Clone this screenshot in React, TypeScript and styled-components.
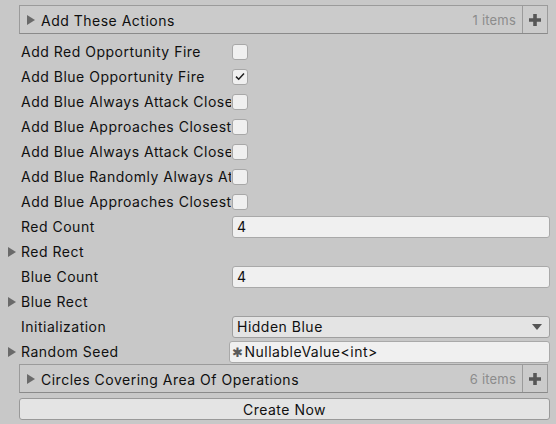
import React from "react";
import styled, { createGlobalStyle } from "styled-components";

const Global = createGlobalStyle`
  html, body { margin: 0; padding: 0; background: #c8c8c8; }
  body { font-family: Inter, "Noto Sans", sans-serif; font-size: 14px; letter-spacing: 0.5px; color: #101010; }
  * { box-sizing: border-box; }
`;

const Page = styled.div`
  width: 556px;
  height: 424px;
  padding-top: 5px;
  display: flex;
  flex-direction: column;
  overflow: hidden;
`;

const ListHeader = styled.div<{ $gapBelow: number }>`
  margin: 0 8px ${(p) => p.$gapBelow}px 19px;
  height: 29px;
  border: 1px solid #9b9b9b;
  border-bottom-color: #8a8a8a;
  background: #cbcbcb;
  display: flex;
  align-items: stretch;
`;

const HeaderTitle = styled.div`
  flex: 1;
  display: flex;
  align-items: center;
  padding-left: 7px;
  padding-top: 1px;
  color: #0f0f0f;
`;

const TitleText = styled.span`
  margin-left: 6px;
`;

const Count = styled.span`
  color: #8c8c8c;
  font-size: 13px;
  letter-spacing: 0.2px;
  padding-right: 6px;
  padding-top: 1px;
  display: flex;
  align-items: center;
`;

const AddButton = styled.div`
  width: 25px;
  border-left: 1px solid #9b9b9b;
  display: flex;
  align-items: center;
  justify-content: center;
`;

const Row = styled.div`
  height: 25px;
  display: flex;
  align-items: center;
  padding: 0 6px;
`;

const ArrowSlot = styled.div`
  width: 15px;
  display: flex;
  align-items: center;
  justify-content: flex-start;
  padding-left: 2px;
`;

const Label = styled.div`
  width: 210px;
  margin-right: 1px;
  white-space: nowrap;
  overflow: hidden;
`;

const Checkbox = styled.div`
  width: 16px;
  height: 16px;
  border: 1px solid #a8a8a8;
  border-radius: 3px;
  background: #f0f0f0;
  display: flex;
  align-items: center;
  justify-content: center;
`;

const TextField = styled.div<{ $shift?: number }>`
  flex: 1;
  height: 22px;
  margin-left: ${(p) => -(p.$shift || 0)}px;
  border: 1px solid #a9a9a9;
  border-radius: 3px;
  background: #f0f0f0;
  display: flex;
  align-items: center;
  padding-left: ${(p) => (p.$shift ? 2 : 4)}px;
  white-space: nowrap;
`;

const Dropdown = styled(TextField)`
  background: #e4e4e4;
  border-color: #9f9f9f;
  justify-content: space-between;
  padding-right: 7px;
`;

const Star = styled.span`
  color: #5a5a5a;
  font-size: 13px;
  margin-right: 1px;
`;

const Button = styled.div`
  margin: 0 6px 0 19px;
  height: 22px;
  border: 1px solid #999;
  border-radius: 3px;
  background: #e4e4e4;
  display: flex;
  align-items: center;
  justify-content: center;
`;

const Fold = ({ color = "#6a6a6a" }: { color?: string }) => (
  <svg width="8" height="10" viewBox="0 0 8 10">
    <path d="M0 0 L8 5 L0 10 Z" fill={color} />
  </svg>
);

const Plus = () => (
  <svg width="14" height="14" viewBox="0 0 14 14">
    <path d="M5.2 1 h3.6 v4.2 h4.2 v3.6 h-4.2 v4.2 h-3.6 v-4.2 h-4.2 v-3.6 h4.2 z" fill="#575757" />
  </svg>
);

const Check = () => (
  <svg width="10" height="9" viewBox="0 0 10 9">
    <path d="M1 4.6 L3.7 7.2 L9 1.5" stroke="#1e1e1e" strokeWidth="1.5" fill="none" />
  </svg>
);

const DownTri = () => (
  <svg width="10" height="6" viewBox="0 0 10 6">
    <path d="M0 0 H10 L5 6 Z" fill="#555" />
  </svg>
);

const checks: [string, boolean][] = [
  ["Add Red Opportunity Fire", false],
  ["Add Blue Opportunity Fire", true],
  ["Add Blue Always Attack Closest", false],
  ["Add Blue Approaches Closest", false],
  ["Add Blue Always Attack Closest Hidden", false],
  ["Add Blue Randomly Always Attack", false],
  ["Add Blue Approaches Closest Hidden", false],
];

export default function App() {
  return (
    <Page>
      <Global />
      <ListHeader $gapBelow={5}>
        <HeaderTitle>
          <Fold />
          <TitleText>Add These Actions</TitleText>
        </HeaderTitle>
        <Count>1 items</Count>
        <AddButton>
          <Plus />
        </AddButton>
      </ListHeader>
      {checks.map(([label, on]) => (
        <Row key={label}>
          <ArrowSlot />
          <Label>{label}</Label>
          <Checkbox>{on && <Check />}</Checkbox>
        </Row>
      ))}
      <Row>
        <ArrowSlot />
        <Label>Red Count</Label>
        <TextField>4</TextField>
      </Row>
      <Row>
        <ArrowSlot>
          <Fold />
        </ArrowSlot>
        <Label>Red Rect</Label>
      </Row>
      <Row>
        <ArrowSlot />
        <Label>Blue Count</Label>
        <TextField>4</TextField>
      </Row>
      <Row>
        <ArrowSlot>
          <Fold />
        </ArrowSlot>
        <Label>Blue Rect</Label>
      </Row>
      <Row>
        <ArrowSlot />
        <Label>Initialization</Label>
        <Dropdown>
          <span>Hidden Blue</span>
          <DownTri />
        </Dropdown>
      </Row>
      <Row>
        <ArrowSlot>
          <Fold />
        </ArrowSlot>
        <Label>Random Seed</Label>
        <TextField $shift={3}>
          <Star>✱</Star>NullableValue&lt;int&gt;
        </TextField>
      </Row>
      <ListHeader $gapBelow={5}>
        <HeaderTitle>
          <Fold />
          <TitleText>Circles Covering Area Of Operations</TitleText>
        </HeaderTitle>
        <Count>6 items</Count>
        <AddButton>
          <Plus />
        </AddButton>
      </ListHeader>
      <Button>Create Now</Button>
    </Page>
  );
}
